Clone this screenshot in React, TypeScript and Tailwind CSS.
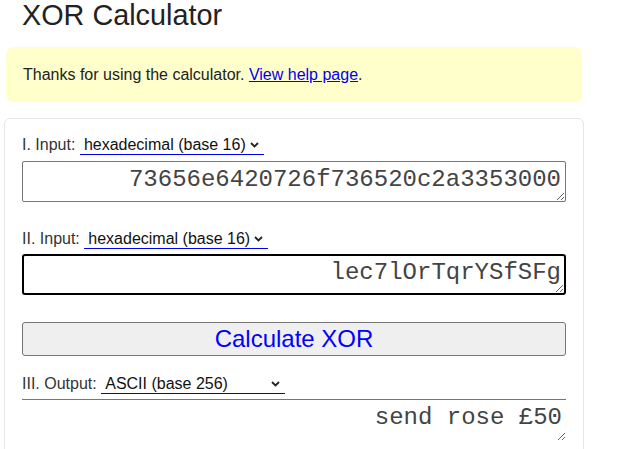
import React from "react";

function Chevron() {
  return (
    <svg width="9" height="6" viewBox="0 0 9 6" className="shrink-0">
      <polyline points="1,1 4.5,4.5 8,1" fill="none" stroke="#222" strokeWidth="1.8" />
    </svg>
  );
}

function FakeSelect({ label }: { label: string }) {
  return (
    <div className="flex h-[19px] w-[184px] items-center justify-between border-b border-[#0000ee] pl-[4px] pr-[5px] leading-[18px] text-[#111]">
      <span>{label}</span>
      <Chevron />
    </div>
  );
}

function Row({ title, value }: { title: string; value: string }) {
  return (
    <div className="flex h-[19px] items-start gap-[4.5px] leading-[18px]">
      <span className="text-[#333]">{title}</span>
      <FakeSelect label={value} />
    </div>
  );
}

export default function App() {
  return (
    <div className="min-h-screen bg-white font-['Liberation_Sans',Arial,sans-serif] text-[16px]">
      <h1 className="pl-[22px] text-[28.8px] leading-[30px] font-normal text-[#222]">XOR Calculator</h1>

      <div className="ml-[6px] mt-[17px] flex h-[55px] w-[576px] items-center rounded-[7px] bg-[#ffffcc] px-[17px] leading-[18px] text-[#222]">
        <p>
          Thanks for using the calculator.{" "}
          <a href="#" className="text-[#0000ee] underline">
            View help page
          </a>
          .
        </p>
      </div>

      <div className="ml-[4px] mt-[16px] w-[580px] rounded-[6px] border border-[#e6e6e6] px-[17px] pt-[17px] pb-[20px]">
        <Row title="I. Input:" value="hexadecimal (base 16)" />
        <textarea
          readOnly
          defaultValue="73656e6420726f736520c2a3353000"
          className="mt-[6px] block h-[41px] w-full rounded-[2px] border border-[#767676] pt-[4px] pr-[4px] text-right font-['Liberation_Mono','Courier_New',monospace] text-[24px] leading-[27px] text-[#444] outline-none"
        />

        <div className="mt-[28px]">
          <Row title="II. Input:" value="hexadecimal (base 16)" />
        </div>
        <textarea
          readOnly
          defaultValue="lec7lOrTqrYSfSFg"
          className="mt-[5px] block h-[41px] w-full rounded-[3px] border-2 border-black pt-[3px] pr-[3px] text-right font-['Liberation_Mono','Courier_New',monospace] text-[24px] leading-[27px] text-[#444] outline-none"
        />

        <button className="mt-[27px] block h-[34px] w-full rounded-[3px] border border-[#767676] bg-[#efefef] text-[24px] leading-[28px] text-[#0000ff]">
          Calculate XOR
        </button>

        <div className="mt-[19px]">
          <Row title="III. Output:" value="ASCII (base 256)" />
        </div>
        <textarea
          readOnly
          defaultValue="send rose £50"
          className="mt-[5px] block h-[42px] w-full border-0 border-t border-[#767676] pt-[4px] pr-[4px] text-right font-['Liberation_Mono','Courier_New',monospace] text-[24px] leading-[27px] text-[#444] outline-none"
        />
      </div>
    </div>
  );
}
